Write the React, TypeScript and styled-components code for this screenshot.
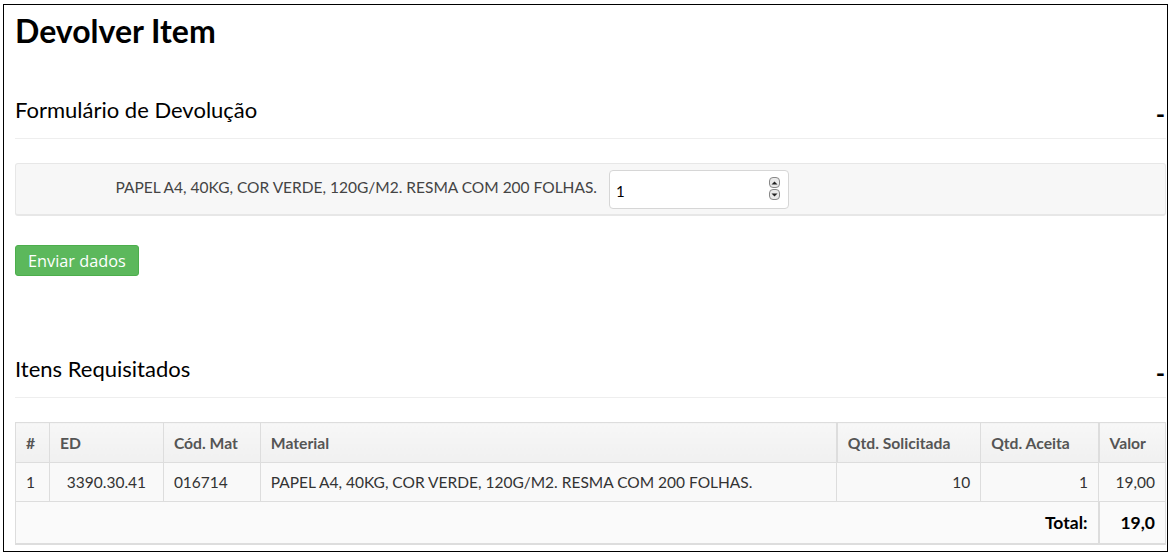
import React from "react";
import styled, { createGlobalStyle } from "styled-components";

const Global = createGlobalStyle`
  html, body { margin: 0; padding: 0; background: #fff; }
  body { font-family: Lato, "Open Sans", sans-serif; color: #333; }
  * { box-sizing: border-box; }
`;

const Frame = styled.div`
  margin: 4px 3px 0 3px;
  width: 1165px;
  height: 548px;
  border: 1px solid #000;
  padding: 0 1px 0 11px;
  overflow: hidden;
`;

const Title = styled.h1`
  margin: 0;
  padding-top: 8px;
  font-family: Lato, sans-serif;
  font-weight: 700;
  font-size: 32px;
  line-height: 36px;
  color: #000;
`;

const SectionHeader = styled.div<{ $top: number }>`
  display: flex;
  justify-content: space-between;
  align-items: flex-start;
  margin-top: ${(p) => p.$top}px;
  padding-bottom: 15px;
  border-bottom: 1px solid #eeeeee;
`;

const SectionTitle = styled.h2`
  margin: 0;
  font-family: Lato, sans-serif;
  font-weight: 400;
  font-size: 22px;
  line-height: 26px;
  color: #000;
`;

const Collapse = styled.span`
  font-family: Lato, sans-serif;
  font-weight: 700;
  font-size: 25px;
  line-height: 20px;
  color: #000;
  margin-right: 1px;
  padding-top: 6px;
`;

const Well = styled.div`
  margin-top: 24px;
  height: 53px;
  background: #f7f7f7;
  border: 1px solid #e7e7e7;
  border-bottom-width: 2px;
  border-radius: 3px;
  display: flex;
  align-items: center;
`;

const FieldLabel = styled.label`
  width: 581px;
  text-align: right;
  font-size: 15.5px;
  color: #444;
  margin-top: -4px;
  white-space: nowrap;
`;

const NumberBox = styled.div`
  margin-left: 12px;
  width: 180px;
  height: 39px;
  background: #fff;
  border: 1px solid #d6d6d6;
  border-radius: 4px;
  display: flex;
  align-items: center;
  justify-content: space-between;
  padding: 4px 8px 0 6px;
  font-size: 15px;
  color: #000;
`;

const Spinner = styled.div`
  display: flex;
  flex-direction: column;
  gap: 1px;
  margin-top: -5px;
`;

const SpinBtn = styled.span`
  width: 11px;
  height: 11px;
  border: 1px solid #888;
  border-radius: 4px;
  background: #e9e9e9;
  display: flex;
  align-items: center;
  justify-content: center;
`;

const SubmitButton = styled.button`
  margin-top: 29px;
  height: 31px;
  padding: 0 12px;
  background: #5cb85c;
  border: 1px solid #4cae4c;
  border-radius: 3px;
  color: #fff;
  font-family: "Open Sans", sans-serif;
  font-size: 16.3px;
  display: block;
`;

const Table = styled.table`
  margin-top: 24px;
  width: 1151px;
  border-collapse: collapse;
  font-size: 15.5px;
  border: 1px solid #dddddd;
  border-bottom-width: 2px;
`;

const Th = styled.th<{ $w: number; $thick?: boolean }>`
  width: ${(p) => p.$w}px;
  height: 40px;
  text-align: left;
  padding: 0 10px;
  font-weight: 700;
  font-size: 15.7px;
  color: #555;
  background: linear-gradient(#f7f7f7, #f0f0f0);
  border: 1px solid #dddddd;
  border-right-width: ${(p) => (p.$thick ? 2 : 1)}px;
  white-space: nowrap;
`;

const Td = styled.td<{ $align?: "left" | "right" | "center" }>`
  height: 39px;
  padding: 0 10px;
  text-align: ${(p) => p.$align ?? "left"};
  color: #333;
  background: #f9f9f9;
  border: 1px solid #dddddd;
  white-space: nowrap;
`;

const FootTd = styled.td<{ $divider?: boolean }>`
  height: 42px;
  padding: 0 10px;
  text-align: right;
  font-weight: 700;
  font-size: 17.5px;
  color: #000;
  background: #fafafa;
  border-top: 1px solid #dddddd;
  border-right: ${(p) => (p.$divider ? "2px solid #dddddd" : "none")};
`;

export default function App() {
  return (
    <>
      <Global />
      <Frame>
        <Title>Devolver Item</Title>
        <SectionHeader $top={48}>
          <SectionTitle>Formulário de Devolução</SectionTitle>
          <Collapse>-</Collapse>
        </SectionHeader>
        <Well>
          <FieldLabel>PAPEL A4, 40KG, COR VERDE, 120G/M2. RESMA COM 200 FOLHAS.</FieldLabel>
          <NumberBox>
            <span>1</span>
            <Spinner>
              <SpinBtn>
                <svg width="7" height="4" viewBox="0 0 7 4"><path d="M0.5 3.5 L3.5 0.5 L6.5 3.5 Z" fill="#222" /></svg>
              </SpinBtn>
              <SpinBtn>
                <svg width="7" height="4" viewBox="0 0 7 4"><path d="M0.5 0.5 L3.5 3.5 L6.5 0.5 Z" fill="#222" /></svg>
              </SpinBtn>
            </Spinner>
          </NumberBox>
        </Well>
        <SubmitButton>Enviar dados</SubmitButton>
        <SectionHeader $top={80}>
          <SectionTitle>Itens Requisitados</SectionTitle>
          <Collapse>-</Collapse>
        </SectionHeader>
        <Table>
          <thead>
            <tr>
              <Th $w={34}>#</Th>
              <Th $w={114}>ED</Th>
              <Th $w={97}>Cód. Mat</Th>
              <Th $w={577} $thick>Material</Th>
              <Th $w={144}>Qtd. Solicitada</Th>
              <Th $w={118} $thick>Qtd. Aceita</Th>
              <Th $w={67}>Valor</Th>
            </tr>
          </thead>
          <tbody>
            <tr>
              <Td>1</Td>
              <Td $align="center">3390.30.41</Td>
              <Td>016714</Td>
              <Td>PAPEL A4, 40KG, COR VERDE, 120G/M2. RESMA COM 200 FOLHAS.</Td>
              <Td $align="right">10</Td>
              <Td $align="right">1</Td>
              <Td $align="right">19,00</Td>
            </tr>
          </tbody>
          <tfoot>
            <tr>
              <FootTd colSpan={6} $divider>Total:</FootTd>
              <FootTd>19,0</FootTd>
            </tr>
          </tfoot>
        </Table>
      </Frame>
    </>
  );
}
